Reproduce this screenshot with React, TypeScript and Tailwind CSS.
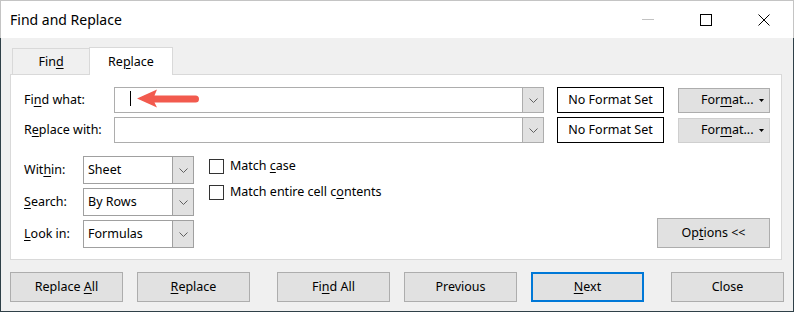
import React from "react";

const font = { fontFamily: '"Noto Sans", "Open Sans", Arial, sans-serif' };

function U({ children }: { children: React.ReactNode }) {
  return <span className="underline underline-offset-[2px] decoration-[1px]">{children}</span>;
}

function Chevron() {
  return (
    <svg width="9" height="5" viewBox="0 0 9 5" className="block">
      <path d="M0.5 0.5 L4.5 4.5 L8.5 0.5" fill="none" stroke="#606060" strokeWidth="1" />
    </svg>
  );
}

function Combo({ children }: { children?: React.ReactNode }) {
  return (
    <div className="relative flex h-[26px] w-[430px] border border-[#adadad] bg-white">
      <div className="flex-1">{children}</div>
      <div className="flex w-[21px] items-center justify-center border-l border-[#adadad] bg-[#e1e1e1]">
        <Chevron />
      </div>
    </div>
  );
}

function Select({ value }: { value: string }) {
  return (
    <div className="flex h-[28px] w-[111px] border border-[#a0a0a0] bg-white">
      <div className="flex flex-1 items-center pl-[4px]">{value}</div>
      <div className="flex w-[21px] items-center justify-center border-l border-[#a0a0a0] bg-[#e1e1e1]">
        <Chevron />
      </div>
    </div>
  );
}

function FormatBtn({ light }: { light?: boolean }) {
  return (
    <div
      className={`ml-[14px] flex h-[25px] w-[92px] items-center border bg-[#e1e1e1] ${
        light ? "border-[#cfcfcf]" : "border-[#adadad]"
      }`}
    >
      <div className="flex-1 pl-[22px]">
        For<U>m</U>at...
      </div>
      <svg width="5" height="3" viewBox="0 0 5 3" className="mr-[5px] block">
        <path d="M0 0 L5 0 L2.5 3 Z" fill="#000" />
      </svg>
    </div>
  );
}

function Btn({
  children,
  className = "",
  primary,
}: {
  children: React.ReactNode;
  className?: string;
  primary?: boolean;
}) {
  return (
    <div
      className={`flex h-[30px] w-[113px] items-center justify-center bg-[#e1e1e1] pt-[1px] ${
        primary ? "border-2 border-[#0078d7]" : "border border-[#adadad]"
      } ${className}`}
    >
      <span>{children}</span>
    </div>
  );
}

function Check({ children }: { children: React.ReactNode }) {
  return (
    <div className="flex h-[15px] items-center">
      <div className="h-[15px] w-[15px] border border-[#333333] bg-white" />
      <div className="ml-[6px]">{children}</div>
    </div>
  );
}

export default function App() {
  return (
    <div className="flex h-[312px] w-[794px] flex-col text-[12.5px] text-black" style={font}>
      {/* Title bar */}
      <div className="flex h-[38px] items-center border-l border-t border-r border-[#c4c4c4] bg-white">
        <div className="pl-[9px] text-[14px] leading-none">Find and Replace</div>
        <div className="ml-auto flex h-full">
          <div className="flex w-[58px] items-center justify-center">
            <div className="h-px w-[12px] bg-[#c2c2c2]" />
          </div>
          <div className="flex w-[58px] items-center justify-center">
            <div className="h-[12px] w-[12px] border border-black" />
          </div>
          <div className="flex w-[58px] items-center justify-center">
            <svg width="12" height="12" viewBox="0 0 12 12" className="block">
              <path d="M0.5 0.5 L11.5 11.5 M11.5 0.5 L0.5 11.5" stroke="#000" strokeWidth="1" />
            </svg>
          </div>
        </div>
      </div>

      {/* Body */}
      <div className="flex flex-1 flex-col border-x border-b border-[#2f4048] bg-[#f0f0f0] pl-[9px] pt-[9px]">
        {/* Tabs */}
        <div className="flex h-[27px] items-end pl-[2px]">
          <div className="flex h-[26px] w-[77px] items-center justify-center border-l border-t border-[#d9d9d9] bg-[#f0f0f0] pt-[2px]">
            <span>
              Fin<U>d</U>
            </span>
          </div>
          <div className="relative z-10 -mb-px flex h-[28px] w-[84px] items-center justify-center border-x border-t border-[#d9d9d9] bg-white pt-[2px]">
            <span>
              Re<U>p</U>lace
            </span>
          </div>
        </div>

        {/* Panel */}
        <div className="flex h-[186px] w-[772px] flex-col border border-[#d9d9d9] bg-white pl-[13px] pt-[12px]">
          <div className="flex h-[26px] items-center">
            <div className="w-[90px]">
              Fi<U>n</U>d what:
            </div>
            <div className="relative">
              <Combo />
              <div className="absolute left-[16px] top-[4px] h-[15px] w-px bg-black" />
              <svg
                width="64"
                height="21"
                viewBox="0 0 64 21"
                className="absolute left-[22px] top-[1px] block"
              >
                <path
                  d="M1 10.5 L21 1.5 L18.5 7.5 L59.5 7.5 A3.5 3.5 0 0 1 59.5 14.5 L18.5 14.5 L21 19.5 Z"
                  fill="#f25a4e"
                />
              </svg>
            </div>
            <div className="ml-[13px] flex h-[26px] w-[107px] items-center justify-center border border-black">
              No Format Set
            </div>
            <FormatBtn />
          </div>

          <div className="mt-[4px] flex h-[26px] items-center">
            <div className="w-[90px]">
              R<U>e</U>place with:
            </div>
            <Combo />
            <div className="ml-[13px] flex h-[26px] w-[107px] items-center justify-center border border-black">
              No Format Set
            </div>
            <FormatBtn light />
          </div>

          <div className="mt-[13px] flex">
            <div className="flex flex-col gap-[4px]">
              <div className="flex items-center">
                <div className="w-[59px]">
                  Wit<U>h</U>in:
                </div>
                <Select value="Sheet" />
              </div>
              <div className="flex items-center">
                <div className="w-[59px]">
                  <U>S</U>earch:
                </div>
                <Select value="By Rows" />
              </div>
              <div className="flex items-center">
                <div className="w-[59px]">
                  <U>L</U>ook in:
                </div>
                <Select value="Formulas" />
              </div>
            </div>

            <div className="ml-[15px] mt-[3px] flex flex-col gap-[11px]">
              <Check>
                Match <U>c</U>ase
              </Check>
              <Check>
                Match entire cell c<U>o</U>ntents
              </Check>
            </div>

            <div className="ml-auto mr-[11px] self-end">
              <Btn>
                Op<U>t</U>ions &lt;&lt;
              </Btn>
            </div>
          </div>
        </div>

        {/* Bottom buttons */}
        <div className="mt-[12px] flex">
          <Btn>
            Replace <U>A</U>ll
          </Btn>
          <Btn className="ml-[14px]">
            <U>R</U>eplace
          </Btn>
          <Btn className="ml-[27px]">
            Fi<U>n</U>d All
          </Btn>
          <Btn className="ml-[14px]">Previous</Btn>
          <Btn className="ml-[14px]" primary>
            <U>N</U>ext
          </Btn>
          <Btn className="ml-[27px]">Close</Btn>
        </div>
      </div>
    </div>
  );
}
